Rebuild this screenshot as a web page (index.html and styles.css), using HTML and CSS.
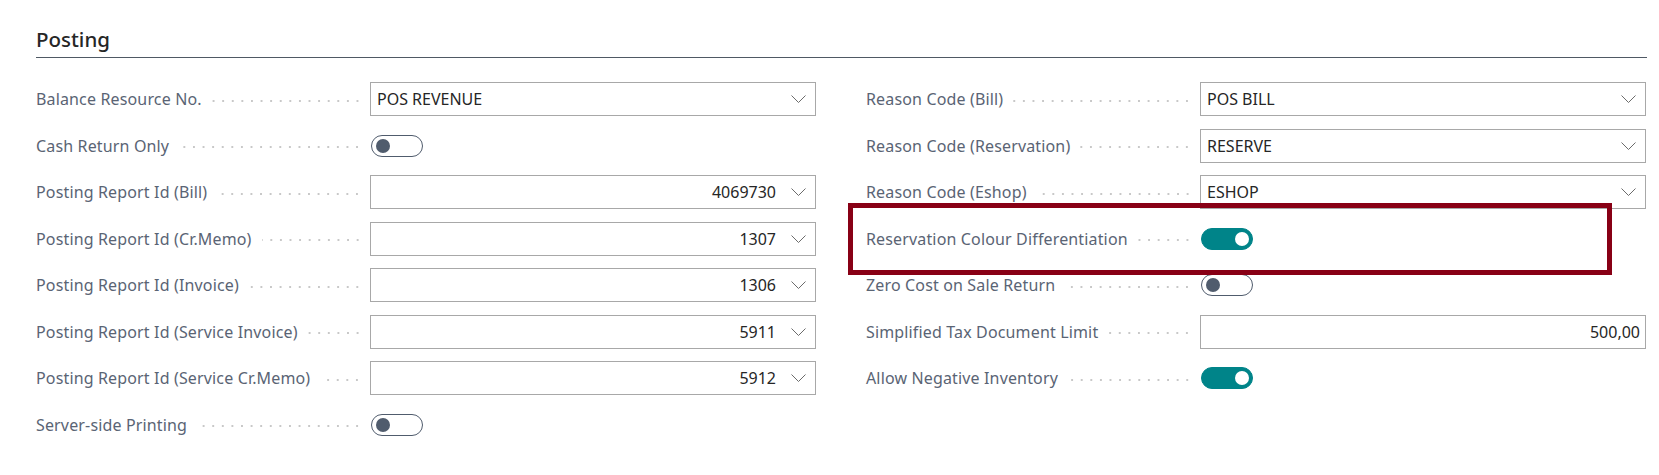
FILE: index.html
```html
<!DOCTYPE html>
<html lang="en">
<head>
<meta charset="utf-8">
<title>Posting</title>
<link rel="stylesheet" href="styles.css">
</head>
<body>
<div class="page">
  <h2 class="section-title">Posting</h2>
  <div class="grid">
    <div class="col">
      <div class="row">
        <div class="label"><span class="text">Balance Resource No.</span><span class="dots"></span></div>
        <div class="field"><span class="value">POS REVENUE</span><svg class="chev" viewBox="0 0 15 8"><path d="M0.5 0.5 L7.5 7.5 L14.5 0.5"/></svg></div>
      </div>
      <div class="row">
        <div class="label"><span class="text">Cash Return Only</span><span class="dots"></span></div>
        <div class="toggle"><span class="knob"></span></div>
      </div>
      <div class="row">
        <div class="label"><span class="text">Posting Report Id (Bill)</span><span class="dots"></span></div>
        <div class="field"><span class="value num">4069730</span><svg class="chev" viewBox="0 0 15 8"><path d="M0.5 0.5 L7.5 7.5 L14.5 0.5"/></svg></div>
      </div>
      <div class="row">
        <div class="label"><span class="text">Posting Report Id (Cr.Memo)</span><span class="dots"></span></div>
        <div class="field"><span class="value num">1307</span><svg class="chev" viewBox="0 0 15 8"><path d="M0.5 0.5 L7.5 7.5 L14.5 0.5"/></svg></div>
      </div>
      <div class="row">
        <div class="label"><span class="text">Posting Report Id (Invoice)</span><span class="dots"></span></div>
        <div class="field"><span class="value num">1306</span><svg class="chev" viewBox="0 0 15 8"><path d="M0.5 0.5 L7.5 7.5 L14.5 0.5"/></svg></div>
      </div>
      <div class="row">
        <div class="label"><span class="text">Posting Report Id (Service Invoice)</span><span class="dots"></span></div>
        <div class="field"><span class="value num">5911</span><svg class="chev" viewBox="0 0 15 8"><path d="M0.5 0.5 L7.5 7.5 L14.5 0.5"/></svg></div>
      </div>
      <div class="row">
        <div class="label"><span class="text">Posting Report Id (Service Cr.Memo)</span><span class="dots"></span></div>
        <div class="field"><span class="value num">5912</span><svg class="chev" viewBox="0 0 15 8"><path d="M0.5 0.5 L7.5 7.5 L14.5 0.5"/></svg></div>
      </div>
      <div class="row">
        <div class="label"><span class="text">Server-side Printing</span><span class="dots"></span></div>
        <div class="toggle"><span class="knob"></span></div>
      </div>
    </div>
    <div class="col">
      <div class="row">
        <div class="label"><span class="text">Reason Code (Bill)</span><span class="dots"></span></div>
        <div class="field"><span class="value">POS BILL</span><svg class="chev" viewBox="0 0 15 8"><path d="M0.5 0.5 L7.5 7.5 L14.5 0.5"/></svg></div>
      </div>
      <div class="row">
        <div class="label"><span class="text">Reason Code (Reservation)</span><span class="dots"></span></div>
        <div class="field"><span class="value">RESERVE</span><svg class="chev" viewBox="0 0 15 8"><path d="M0.5 0.5 L7.5 7.5 L14.5 0.5"/></svg></div>
      </div>
      <div class="row">
        <div class="label"><span class="text">Reason Code (Eshop)</span><span class="dots"></span></div>
        <div class="field"><span class="value">ESHOP</span><svg class="chev" viewBox="0 0 15 8"><path d="M0.5 0.5 L7.5 7.5 L14.5 0.5"/></svg></div>
      </div>
      <div class="row">
        <div class="label"><span class="text">Reservation Colour Differentiation</span><span class="dots"></span></div>
        <div class="toggle on"><span class="knob"></span></div>
      </div>
      <div class="row">
        <div class="label"><span class="text">Zero Cost on Sale Return</span><span class="dots"></span></div>
        <div class="toggle"><span class="knob"></span></div>
      </div>
      <div class="row">
        <div class="label"><span class="text">Simplified Tax Document Limit</span><span class="dots"></span></div>
        <div class="field plain"><span class="value num">500,00</span></div>
      </div>
      <div class="row">
        <div class="label"><span class="text">Allow Negative Inventory</span><span class="dots"></span></div>
        <div class="toggle on"><span class="knob"></span></div>
      </div>
    </div>
  </div>
  <div class="highlight"></div>
</div>
</body>
</html>
```
FILE: styles.css
```css
html, body {
  margin: 0;
  padding: 0;
  background: #ffffff;
}

body {
  font-family: "Noto Sans", "Open Sans", sans-serif;
  font-size: 16px;
  color: #212121;
}

.page {
  position: relative;
  width: 1611px;
  padding: 0 12px 0 36px;
}

.section-title {
  margin: 0;
  padding: 27px 0 6px;
  font-size: 20.5px;
  line-height: 24px;
  font-weight: 500;
  color: #262626;
  border-bottom: 1px solid #4f5964;
}

.grid {
  display: grid;
  grid-template-columns: 780px 780px;
  column-gap: 50px;
  margin-top: 17.75px;
}

.col {
  display: flex;
  flex-direction: column;
}

.row {
  display: flex;
  align-items: center;
  height: 46.5px;
}

.label {
  width: 334px;
  flex: none;
  display: flex;
  align-items: center;
  padding-right: 8px;
  box-sizing: border-box;
  color: #5a6474;
  letter-spacing: 0.15px;
  white-space: nowrap;
}

.dots {
  flex: 1;
  height: 4px;
  margin: 3px 0 0 10px;
  background-image: radial-gradient(circle, #c8c8c8 0.9px, rgba(255,255,255,0) 1.3px);
  background-size: 9.6px 4px;
  background-position: right center;
  background-repeat: repeat-x;
}

.field {
  width: 446px;
  height: 34px;
  flex: none;
  box-sizing: border-box;
  border: 1px solid #a8a8a8;
  display: flex;
  align-items: center;
  padding: 0 9px 0 6px;
  color: #262626;
  white-space: nowrap;
}

.field.plain {
  padding-right: 5px;
}

.value {
  flex: 1;
}

.value.num {
  text-align: right;
}

.chev {
  width: 15px;
  height: 8px;
  margin-left: 15px;
  flex: none;
  fill: none;
  stroke: #6b6b6b;
  stroke-width: 1;
}

.toggle {
  width: 52px;
  height: 22px;
  flex: none;
  box-sizing: border-box;
  margin-left: 1px;
  border: 1px solid #505c6d;
  border-radius: 11px;
  display: flex;
  align-items: center;
  padding: 0 3px 0 4px;
}

.knob {
  width: 14px;
  height: 14px;
  border-radius: 50%;
  background: #505c6d;
}

.toggle.on {
  background: #008489;
  border-color: #008489;
  justify-content: flex-end;
}

.toggle.on .knob {
  background: #ffffff;
}

.highlight {
  position: absolute;
  left: 848px;
  top: 203px;
  width: 764px;
  height: 72px;
  box-sizing: border-box;
  border: 5px solid #880015;
  pointer-events: none;
}
```
